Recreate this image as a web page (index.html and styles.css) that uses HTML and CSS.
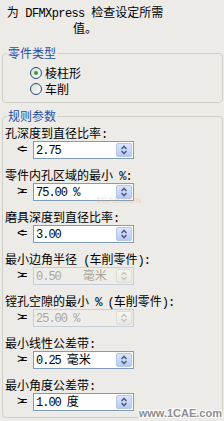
FILE: index.html
```html
<!DOCTYPE html>
<html>
<head>
<meta charset="utf-8">
<link rel="stylesheet" href="styles.css">
</head>
<body>
<div class="panel">
  <p class="desc">为<span class="a"> DFMXpress </span>检查设定所需<br>值。</p>

  <fieldset class="group g1">
    <legend>零件类型</legend>
    <div class="radio"><span class="rb on"></span><span>棱柱形</span></div>
    <div class="radio"><span class="rb"></span><span>车削</span></div>
  </fieldset>

  <fieldset class="group g2">
    <legend>规则参数</legend>

    <div class="field">
      <div class="lbl">孔深度到直径比率<span class="a">:</span></div>
      <div class="row"><span class="sym">&lt;=</span>
        <div class="spin"><span class="val"><span class="a">2.75</span></span>
          <span class="btn"><svg viewBox="0 0 16 14" width="16" height="14"><path d="M5.5 6 L8 3.5 L10.5 6 M5.5 8 L8 10.5 L10.5 8"/></svg></span></div>
      </div>
    </div>

    <div class="field">
      <div class="lbl">零件内孔区域的最小<span class="a"> %:</span></div>
      <div class="row"><span class="sym">&gt;=</span>
        <div class="spin"><span class="val"><span class="a">75.00 %</span></span>
          <span class="btn"><svg viewBox="0 0 16 14" width="16" height="14"><path d="M5.5 6 L8 3.5 L10.5 6 M5.5 8 L8 10.5 L10.5 8"/></svg></span></div>
      </div>
    </div>

    <div class="field">
      <div class="lbl">磨具深度到直径比率<span class="a">:</span></div>
      <div class="row"><span class="sym">&lt;=</span>
        <div class="spin"><span class="val"><span class="a">3.00</span></span>
          <span class="btn"><svg viewBox="0 0 16 14" width="16" height="14"><path d="M5.5 6 L8 3.5 L10.5 6 M5.5 8 L8 10.5 L10.5 8"/></svg></span></div>
      </div>
    </div>

    <div class="field">
      <div class="lbl">最小边角半径<span class="a"> (</span>车削零件<span class="a">):</span></div>
      <div class="row"><span class="sym">&gt;=</span>
        <div class="spin off"><span class="val"><span class="a">0.50</span><span class="u wide">毫米</span></span>
          <span class="btn"><svg viewBox="0 0 16 14" width="16" height="14"><path d="M5.5 6 L8 3.5 L10.5 6 M5.5 8 L8 10.5 L10.5 8"/></svg></span></div>
      </div>
    </div>

    <div class="field">
      <div class="lbl">镗孔空隙的最小<span class="a"> % (</span>车削零件<span class="a">):</span></div>
      <div class="row"><span class="sym">&gt;=</span>
        <div class="spin off"><span class="val"><span class="a">25.00 %</span></span>
          <span class="btn"><svg viewBox="0 0 16 14" width="16" height="14"><path d="M5.5 6 L8 3.5 L10.5 6 M5.5 8 L8 10.5 L10.5 8"/></svg></span></div>
      </div>
    </div>

    <div class="field">
      <div class="lbl">最小线性公差带<span class="a">:</span></div>
      <div class="row"><span class="sym">&gt;=</span>
        <div class="spin"><span class="val"><span class="a">0.25</span><span class="u">毫米</span></span>
          <span class="btn"><svg viewBox="0 0 16 14" width="16" height="14"><path d="M5.5 6 L8 3.5 L10.5 6 M5.5 8 L8 10.5 L10.5 8"/></svg></span></div>
      </div>
    </div>

    <div class="field">
      <div class="lbl">最小角度公差带<span class="a">:</span></div>
      <div class="row"><span class="sym">&gt;=</span>
        <div class="spin"><span class="val"><span class="a">1.00</span><span class="u">度</span></span>
          <span class="btn"><svg viewBox="0 0 16 14" width="16" height="14"><path d="M5.5 6 L8 3.5 L10.5 6 M5.5 8 L8 10.5 L10.5 8"/></svg></span></div>
      </div>
    </div>
  </fieldset>

  <div class="wm-mid">1CAE.com</div>
  <div class="wm">www.1CAE.com</div>
</div>
</body>
</html>
```

FILE: styles.css
```css
html, body {
  margin: 0;
  padding: 0;
}

body {
  background: #ECEBE8;
  font-family: "Noto Sans CJK SC", sans-serif;
  font-size: 12px;
  color: #000;
}

.panel {
  position: relative;
  width: 224px;
  height: 421px;
  box-sizing: border-box;
  padding: 5px 1px 0 2px;
  overflow: hidden;
}

.a {
  font-family: "Liberation Mono", monospace;
  font-size: 12px;
  letter-spacing: -1px;
}

.desc {
  margin: 0 0 12px;
  width: 166px;
  text-align: center;
  line-height: 13px;
  white-space: nowrap;
}

.desc .a {
  letter-spacing: -0.6px;
}

.group {
  margin: 0;
  padding: 0;
  min-width: 0;
  border: 1px solid #D0D0C8;
  border-radius: 4px;
}

.group legend {
  margin-left: 4px;
  padding: 0 1px;
  height: 14px;
  line-height: 14px;
  color: #1F4FA8;
}

.g1 {
  padding: 5px 0 5px;
}

.radio {
  display: flex;
  align-items: center;
  gap: 3px;
  height: 16px;
  padding-left: 27px;
  line-height: 16px;
}

.rb {
  position: relative;
  width: 12px;
  height: 12px;
  box-sizing: border-box;
  border: 1px solid #1C5180;
  border-radius: 50%;
  background: linear-gradient(135deg, #DCDCD4, #FFFFFF);
}

.rb.on::after {
  content: "";
  position: absolute;
  left: 3px;
  top: 3px;
  width: 4px;
  height: 4px;
  border-radius: 50%;
  background: #3A9A3A;
}

.g2 {
  margin-top: 6px;
  padding: 3px 0 6px;
}

.field + .field {
  margin-top: 9px;
}

.lbl {
  height: 14px;
  line-height: 14px;
  padding-left: 2px;
  white-space: nowrap;
}

.row {
  display: flex;
  align-items: center;
  margin-top: 1px;
  padding-left: 14px;
}

.sym {
  width: 16px;
  font-family: "Liberation Mono", monospace;
  font-size: 12px;
  letter-spacing: -4px;
  line-height: 18px;
}

.spin {
  width: 101px;
  height: 18px;
  box-sizing: border-box;
  border: 1px solid #7F9DB9;
  background: #FFFFFF;
  display: flex;
  align-items: center;
  justify-content: space-between;
  padding: 1px 1px 1px 2px;
}

.val {
  line-height: 14px;
  white-space: nowrap;
}

.u {
  margin-left: 6px;
}

.u.wide {
  margin-left: 22px;
}

.btn {
  width: 16px;
  height: 14px;
  box-sizing: border-box;
  border: 1px solid #B4C6EE;
  border-radius: 2px;
  background: linear-gradient(#DCE6FC, #B8CAF4);
  display: flex;
}

.btn svg {
  display: block;
  margin: -1px;
  fill: none;
  stroke: #4D6185;
  stroke-width: 1.6;
}

.spin.off {
  background: #EEEDEA;
  border-color: #C5CEDC;
  color: #ACA899;
}

.spin.off .btn {
  border-color: #DCDBD4;
  background: linear-gradient(#F6F6F3, #E8E8E3);
}

.spin.off .btn svg {
  stroke: #C9C7BA;
}

.wm-mid {
  position: absolute;
  left: 96px;
  top: 195px;
  font-family: "Liberation Sans", sans-serif;
  font-weight: bold;
  font-size: 9px;
  line-height: 10px;
  color: #E8A050;
  opacity: 0.25;
}

.wm {
  position: absolute;
  right: 2px;
  bottom: 2px;
  font-family: "Liberation Sans", sans-serif;
  font-weight: bold;
  font-size: 11px;
  color: #8E8E8E;
  text-shadow: 1px 1px 0 #FFFFFF, -1px -1px 0 #FFFFFF, 1px -1px 0 #FFFFFF, -1px 1px 0 #FFFFFF;
}
```
